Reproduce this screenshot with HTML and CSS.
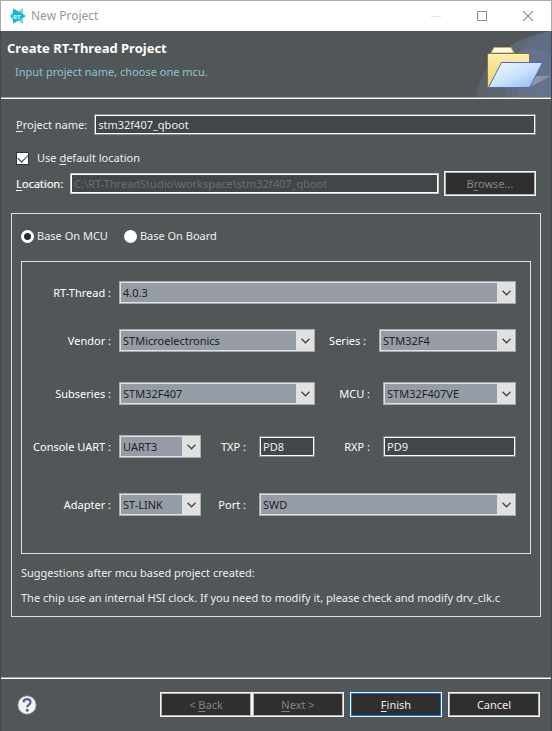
FILE: index.html
```html
<!DOCTYPE html>
<html lang="en">
<head>
<meta charset="utf-8">
<meta name="viewport" content="width=device-width, initial-scale=1">
<title>New Project</title>
<link rel="stylesheet" href="styles.css">
</head>
<body>
<svg class="defs" aria-hidden="true">
  <symbol id="chevron" viewBox="0 0 9 6"><path d="M.5 .8 4.5 4.8 8.5 .8" fill="none" stroke="#444" stroke-width="1.3"/></symbol>
</svg>
<div class="window">
  <div class="titlebar">
    <svg class="app-icon" viewBox="0 0 18 18" aria-hidden="true">
      <path d="M14 1V17L9 13.500 6 9 9 4.500Z" fill="#6fe8b4"/>
      <path d="M.8 9 4 4V14Z" fill="#6fe8b4"/>
      <path d="M17 9 4 16.800V1.200Z" fill="#14b4e6"/>
      <path d="M1.500 9 6 5.500H12V12.500H6Z" fill="#14b4e6"/>
      <text x="4" y="11.500" class="app-icon-text">RT</text>
    </svg>
    <span class="title">New Project</span>
    <div class="window-buttons">
      <button type="button" aria-label="Minimize" disabled><svg viewBox="0 0 10 10"><path d="M0 5.500H10" stroke="#e2e2e2"/></svg></button>
      <button type="button" aria-label="Maximize"><svg viewBox="0 0 10 10"><path d="M.5 .5H9.500V9.500H.5Z" fill="none" stroke="#888"/></svg></button>
      <button type="button" aria-label="Close"><svg viewBox="0 0 10 10"><path d="M0 0 10 10M10 0 0 10" stroke="#888" stroke-width="1.100"/></svg></button>
    </div>
  </div>

  <header class="banner">
    <div class="banner-text">
      <h1>Create RT-Thread Project</h1>
      <p>Input project name, choose one mcu.</p>
    </div>
    <svg class="banner-art" viewBox="0 0 75 66" aria-hidden="true">
      <defs>
        <linearGradient id="wash" x1="0" x2="1" y1="0" y2="0"><stop offset="0" stop-color="#5b6164"/><stop offset="1" stop-color="#5f6b80"/></linearGradient>
        <linearGradient id="back" x1="0" x2="0" y1="0" y2="1"><stop offset="0" stop-color="#fbeeb0"/><stop offset="1" stop-color="#efd36d"/></linearGradient>
        <linearGradient id="front" x1="0" x2="1" y1="0" y2="1"><stop offset="0" stop-color="#f2f9ff"/><stop offset=".5" stop-color="#cbe2fa"/><stop offset="1" stop-color="#8db4ea"/></linearGradient>
        <linearGradient id="shade" x1="0" x2="1" y1="0" y2="0"><stop offset="0" stop-color="#b3b7bf"/><stop offset="1" stop-color="#858da0"/></linearGradient>
      </defs>
      <path d="M0 66C4 34 34 6 75 0V66Z" fill="url(#wash)"/>
      <path d="M30 66V50C34 25 50 6 75 1V66Z" fill="#62708a" opacity=".55"/>
      <path d="M42 22Q58 12 75 24V66H42Z" fill="#7180a0" opacity=".3"/>
      <path d="M14 57H52L75 45H60Z" fill="url(#shade)"/>
      <path d="M15 22 18 16.500H35L38 22Z" fill="#fffbe0" stroke="#c2ad68"/>
      <path d="M11.500 24Q11.500 22.500 13 22.500H52Q53.500 22.500 53.500 24V56H11.500Z" fill="url(#back)" stroke="#8b7042"/>
      <path d="M25.500 31.500H66.500L54 56Q53.500 56.500 52 56.500H12.500Z" fill="url(#front)" stroke="#4d6bbd"/>
    </svg>
  </header>

  <form class="form">
    <div class="line">
      <label for="name"><u>P</u>roject name:</label>
      <input class="text" id="name" type="text" value="stm32f407_qboot">
    </div>
    <label class="check"><input type="checkbox" checked><span>Use <u>d</u>efault location</span></label>
    <div class="line">
      <label class="location" for="location"><u>L</u>ocation:</label>
      <input class="text text-location" id="location" type="text" value="C:\RT-ThreadStudio\workspace\stm32f407_qboot" disabled>
      <button class="button" type="button" disabled>B<u>r</u>owse...</button>
    </div>

    <section class="group">
      <div class="radios">
        <label><input type="radio" name="base" checked>Base On MCU</label>
        <label><input type="radio" name="base">Base On Board</label>
      </div>
      <div class="panel">
        <div class="row">
          <label class="lead" for="rtt">RT-Thread :</label>
          <div class="combo fill"><select id="rtt"><option>4.0.3</option></select><svg><use href="#chevron"/></svg></div>
        </div>
        <div class="row">
          <label class="lead" for="vendor">Vendor :</label>
          <div class="combo medium"><select id="vendor"><option>STMicroelectronics</option></select><svg><use href="#chevron"/></svg></div>
          <label class="mid mid-short" for="series">Series :</label>
          <div class="combo fill"><select id="series"><option>STM32F4</option></select><svg><use href="#chevron"/></svg></div>
        </div>
        <div class="row">
          <label class="lead" for="sub">Subseries :</label>
          <div class="combo medium"><select id="sub"><option>STM32F407</option></select><svg><use href="#chevron"/></svg></div>
          <label class="mid" for="mcu">MCU :</label>
          <div class="combo fill"><select id="mcu"><option>STM32F407VE</option></select><svg><use href="#chevron"/></svg></div>
        </div>
        <div class="row">
          <label class="lead" for="uart">Console UART :</label>
          <div class="combo small"><select id="uart"><option>UART3</option></select><svg><use href="#chevron"/></svg></div>
          <label class="mid mid-pin" for="txp">TXP :</label>
          <input class="text pin" id="txp" type="text" value="PD8">
          <label class="mid" for="rxp">RXP :</label>
          <input class="text" id="rxp" type="text" value="PD9">
        </div>
        <div class="row">
          <label class="lead" for="adapter">Adapter :</label>
          <div class="combo small"><select id="adapter"><option>ST-LINK</option></select><svg><use href="#chevron"/></svg></div>
          <label class="mid mid-pin" for="port">Port :</label>
          <div class="combo fill"><select id="port"><option>SWD</option></select><svg><use href="#chevron"/></svg></div>
        </div>
      </div>
      <p class="note">Suggestions after mcu based project created:</p>
      <p class="note">The chip use an internal HSI clock. If you need to modify it, please check and modify drv_clk.c</p>
    </section>
  </form>

  <footer class="footer">
    <button class="help" type="button" aria-label="Help">
      <svg viewBox="0 0 20 20">
        <circle cx="10" cy="10" r="9.200" fill="#f3f3f5" stroke="#7b8494" stroke-width=".8"/>
        <path d="M6.500 7.300C6.700 5.200 8 4.200 10 4.200S13.500 5.300 13.500 7.200C13.500 9.700 10.200 9.500 10.200 12.300" fill="none" stroke="#52628a" stroke-width="2.200"/>
        <circle cx="10.200" cy="15.300" r="1.500" fill="#52628a"/>
      </svg>
    </button>
    <div class="steps">
      <button class="button" type="button" disabled>&lt; <u>B</u>ack</button>
      <button class="button" type="button" disabled><u>N</u>ext &gt;</button>
    </div>
    <button class="button primary" type="submit"><u>F</u>inish</button>
    <button class="button" type="button">Cancel</button>
  </footer>
</div>
</body>
</html>
```
FILE: styles.css
```css
* { box-sizing: border-box; }

body {
  margin: 0;
  background: #515658;
  color: #eee;
  font: 11px/16px "Noto Sans", "Open Sans", sans-serif;
}

h1, p { margin: 0; }
button, input, select { font: inherit; margin: 0; }
u { text-underline-offset: 2px; }
.defs { position: absolute; width: 0; height: 0; }

.window {
  display: flex;
  flex-direction: column;
  min-height: 100vh;
  border: solid #45494b;
  border-width: 0 1px;
}

.titlebar {
  display: flex;
  align-items: center;
  height: 31px;
  margin: 0 -1px;
  padding-left: 8px;
  border: 1px solid #aaa;
  border-bottom: 0;
  background: #fff;
  color: #999;
}
.app-icon { width: 18px; height: 18px; margin-right: 4px; }
.app-icon-text { font: bold 6px "Open Sans", sans-serif; fill: #fff; }
.title { flex: 1; font-size: 12px; }
.window-buttons { display: flex; }
.window-buttons button {
  display: grid;
  place-items: center;
  width: 46px;
  height: 30px;
  padding: 0;
  border: 0;
  background: none;
}
.window-buttons svg { width: 10px; height: 10px; }

.banner {
  display: flex;
  justify-content: space-between;
  height: 68px;
  border-bottom: 1px solid #fff;
  box-shadow: inset 0 -1px #a0a2a3;
}
.banner-text { padding: 9px 0 0 6px; }
.banner h1 { font-size: 13px; line-height: 16px; color: #fff; }
.banner p { padding: 8px 0 0 8px; color: #8fc6d2; }
.banner-art { width: 75px; height: 66px; }

.form { flex: 1; padding: 15px 10px 0; }
.line {
  display: flex;
  align-items: center;
  padding: 0 5px;
}
.line label { margin-right: 7px; }
.text {
  flex: 1;
  min-width: 0;
  height: 21px;
  padding: 0 2px;
  border: 2px solid #fff;
  outline: 1px solid #85898b;
  outline-offset: -1px;
  background: #414649;
  color: #eee;
}
.text:disabled { color: #6d6d6d; outline-color: #c8c8c4; }
.text-location { margin-right: 5px; }
.location { color: #fff; text-shadow: 1px 0 rgba(255, 255, 255, .3); }

.check {
  display: flex;
  align-items: center;
  gap: 8px;
  width: max-content;
  margin: 15px 5px 5px;
}
.check input {
  appearance: none;
  display: grid;
  place-items: center;
  width: 13px;
  height: 13px;
  border: 1px solid #333;
  background: #fff;
}
.check input:checked::after {
  content: "";
  width: 9px;
  height: 5px;
  border: solid #333;
  border-width: 0 0 1px 1px;
  transform: translateY(-1px) rotate(-45deg);
}

.button {
  width: 92px;
  height: 25px;
  padding: 0;
  border: 1px solid #f4f4f4;
  outline: 1px solid #b4b4b0;
  outline-offset: -2px;
  background: #2f2f2f;
  color: #eee;
}
.button:disabled { color: #858585; }
.primary { outline-color: #0078d7; }

.group {
  margin-top: 17px;
  padding: 14px 9px 10px;
  border: 1px solid #dde0e0;
}
.radios { display: flex; gap: 16px; }
.radios label { display: flex; align-items: center; gap: 3px; }
.radios input {
  appearance: none;
  width: 13px;
  height: 13px;
  border-radius: 50%;
  background: #fff;
}
.radios input:checked { background: radial-gradient(circle, #2b2b2b 3px, #fff 4px); }

.panel {
  display: grid;
  grid-template-columns: minmax(0, 1fr);
  grid-template-rows: 48px 53px 53px 58px 23px;
  margin: 17px 0 11px;
  padding: 19px 14px 37px 0;
  border: 1px solid #dde0e0;
}
.row { display: flex; align-items: center; height: 23px; }
.row label { flex: none; text-align: right; color: #fff; }
.lead { width: 97px; padding-right: 8px; }
.mid { width: 68px; padding-right: 13px; }
.row .mid-short { width: 64px; }
.row .mid-pin { width: 58px; }
.row .pin { flex: none; width: 56px; }
.small { width: 82px; }
.medium { width: 196px; }
.fill { flex: 1; }

.combo { position: relative; height: 23px; }
.combo select {
  appearance: none;
  display: block;
  width: 100%;
  height: 23px;
  padding: 0 19px 0 2px;
  border: 2px solid #e1e1e1;
  border-radius: 0;
  outline: 1px solid #aaa;
  outline-offset: -1px;
  background: linear-gradient(to left, #e1e1e1 17px, #969ca6 17px);
  color: #222;
}
.combo svg {
  position: absolute;
  right: 5px;
  top: 9px;
  width: 9px;
  height: 6px;
  pointer-events: none;
}

.note + .note { margin-top: 9px; }

.footer {
  display: flex;
  align-items: center;
  gap: 6px;
  height: 54px;
  padding: 0 11px 0 16px;
  border-top: 1px solid #a0a2a3;
  box-shadow: inset 0 1px #fff;
}
.help {
  width: 20px;
  height: 20px;
  margin-right: auto;
  padding: 0;
  border: 0;
  background: none;
}
.help svg { display: block; }
.steps { display: flex; }
```
